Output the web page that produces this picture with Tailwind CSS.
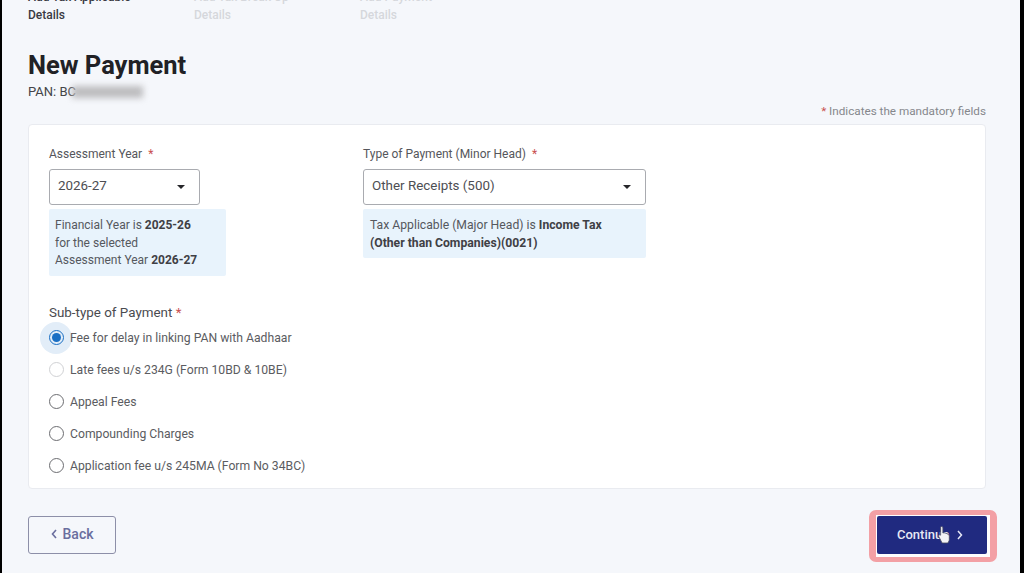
<!DOCTYPE html>
<html lang="en">
<head>
  <meta charset="UTF-8" />
  <title>New Payment</title>
  <script src="https://cdn.jsdelivr.net/npm/@tailwindcss/browser@4"></script>
</head>
<body class="bg-black font-['Roboto',sans-serif]">
  <div class="ml-[2px] mr-[4px] h-[573px] overflow-hidden bg-[#f5f7fb] px-[26px]">

    <!-- stepper, cut off by the top of the frame -->
    <div class="flex -mt-[12px] text-[12px] leading-[18px] font-medium h-[35px]">
      <div class="w-[166px] text-[#3a3a42]">Add Tax Applicable<br>Details</div>
      <div class="w-[166px] text-[#d5d7dc]">Add Tax Break Up<br>Details</div>
      <div class="w-[166px] text-[#d5d7dc]">Add Payment<br>Details</div>
    </div>

    <h1 class="mt-[26px] text-[25.5px] leading-[32px] font-bold text-[#212125]">New Payment</h1>
    <div class="mt-[2px] flex items-center text-[13px] leading-[18px] text-[#444448]">
      <span>PAN: BC</span>
      <span class="-ml-[4px] w-[71px] h-[12px] bg-[#bdbdbf] blur-[3px]"></span>
    </div>

    <p class="mt-[2px] w-[958px] text-right text-[11.7px] leading-[16px] text-[#85878c]"><span class="text-[#c9504f]">*</span> Indicates the mandatory fields</p>

    <!-- form card -->
    <div class="mt-[5px] h-[365px] w-[958px] rounded-[4px] border border-[#e9ebf0] bg-white pl-[20px] pt-[21px]">
      <div class="flex">
        <div class="w-[314px]">
          <label class="block text-[12px] leading-[16px] text-[#55565b]">Assessment Year <span class="ml-[3px] text-[#c9504f]">*</span></label>
          <div class="mt-[7px] flex h-[36px] w-[151px] items-center justify-between rounded-[3px] border border-[#a9abb0] pl-[8px] pr-[14px] text-[13.4px] text-[#4d4e53]">
            <span class="-mt-[1px]">2026-27</span>
            <span class="h-0 w-0 border-x-[4.5px] border-t-[4.5px] border-x-transparent border-t-[#26262a]"></span>
          </div>
          <div class="mt-[4px] w-[177px] rounded-[2px] bg-[#e8f3fc] px-[6px] pt-[8px] pb-[6px] text-[12px] leading-[17.5px] text-[#55585e]">
            Financial Year is <b class="font-bold text-[#3f4045]">2025-26</b><br>for the selected<br>Assessment Year <b class="font-bold text-[#3f4045]">2026-27</b>
          </div>
        </div>
        <div class="w-[283px]">
          <label class="block text-[12px] leading-[16px] text-[#55565b]">Type of Payment (Minor Head) <span class="ml-[3px] text-[#c9504f]">*</span></label>
          <div class="mt-[7px] flex h-[36px] w-[283px] items-center justify-between rounded-[3px] border border-[#a9abb0] pl-[8px] pr-[14px] text-[13.4px] text-[#4d4e53]">
            <span class="-mt-[1px]">Other Receipts (500)</span>
            <span class="h-0 w-0 border-x-[4.5px] border-t-[4.5px] border-x-transparent border-t-[#26262a]"></span>
          </div>
          <div class="mt-[4px] rounded-[2px] bg-[#e8f3fc] px-[7px] pt-[8px] pb-[6px] text-[12.2px] leading-[17.5px] text-[#55585e]">
            Tax Applicable (Major Head) is <b class="font-bold text-[#3f4045]">Income Tax<br>(Other than Companies)(0021)</b>
          </div>
        </div>
      </div>

      <p class="mt-[28px] text-[13.4px] leading-[18px] text-[#4a4b50]">Sub-type of Payment <span class="text-[#c9504f]">*</span></p>

      <div class="mt-[8px] flex flex-col gap-[16px] text-[12.2px] leading-[16px] text-[#5b5c61]">
        <div class="flex items-center gap-[6px] relative">
          <span class="absolute -left-[9px] top-[-8px] h-[32px] w-[32px] rounded-full bg-[#e2edf8]"></span>
          <span class="relative flex h-[15px] w-[15px] items-center justify-center rounded-full border-[1.5px] border-[#1a6fc4]"><span class="h-[9px] w-[9px] rounded-full bg-[#1a6fc4]"></span></span>
          <span class="relative">Fee for delay in linking PAN with Aadhaar</span>
        </div>
        <div class="flex items-center gap-[6px]">
          <span class="h-[15px] w-[15px] rounded-full border-[1.5px] border-[#d0d1d4]"></span>
          <span>Late fees u/s 234G (Form 10BD &amp; 10BE)</span>
        </div>
        <div class="flex items-center gap-[6px]">
          <span class="h-[15px] w-[15px] rounded-full border-[1.5px] border-[#6c6d71]"></span>
          <span>Appeal Fees</span>
        </div>
        <div class="flex items-center gap-[6px]">
          <span class="h-[15px] w-[15px] rounded-full border-[1.5px] border-[#6c6d71]"></span>
          <span>Compounding Charges</span>
        </div>
        <div class="flex items-center gap-[6px]">
          <span class="h-[15px] w-[15px] rounded-full border-[1.5px] border-[#6c6d71]"></span>
          <span>Application fee u/s 245MA (Form No 34BC)</span>
        </div>
      </div>
    </div>

    <!-- footer buttons -->
    <div class="mt-[27px] flex items-start justify-between w-[959px]">
      <button class="flex h-[38px] w-[88px] items-center justify-center gap-[6px] rounded-[3px] border border-[#8d8fa8] pb-[2px] text-[14px] font-medium text-[#6a6e9e]">
        <svg width="6" height="10" viewBox="0 0 6 10" fill="none" stroke="currentColor" stroke-width="1.6"><path d="M5 1 1.5 5 5 9"/></svg>
        Back
      </button>
      <div class="relative h-[38px] w-[110px]">
        <!-- highlight drawn over the recording -->
        <span class="absolute -left-[8px] -right-[10px] -top-[6px] -bottom-[8px] rounded-[7px] border-y-[5px] border-x-[7px] border-[#f3a0a5] bg-white/80"></span>
        <button class="relative flex h-[38px] w-[110px] items-center gap-[8px] rounded-[2px] bg-[#202a80] pb-[1px] pl-[20px] text-[13px] font-medium text-[#e6e8f5]">
          Continue
          <svg width="6" height="10" viewBox="0 0 6 10" fill="none" stroke="currentColor" stroke-width="1.5"><path d="M1 1 4.5 5 1 9"/></svg>
        </button>
        <!-- mouse pointer from the recording -->
        <svg class="absolute left-[60px] top-[9px]" width="15" height="20" viewBox="0 0 14 20">
          <path d="M4 1.5c.9 0 1.4.6 1.4 1.5v5l.9-.2 1 .1 1 .3 1 .4 1.3.6c.8.5 1.2 1.2 1.2 2.1v3.2c0 1-.3 1.8-.9 2.6l-.5.9H4.6L1.5 12c-.6-.7-.6-1.5 0-2 .6-.4 1.2-.3 1.6.2V3c0-.9.1-1.5.9-1.5z" fill="#f4f4f6" stroke="#44465c" stroke-width=".8"/>
        </svg>
      </div>
    </div>
  </div>
</body>
</html>
